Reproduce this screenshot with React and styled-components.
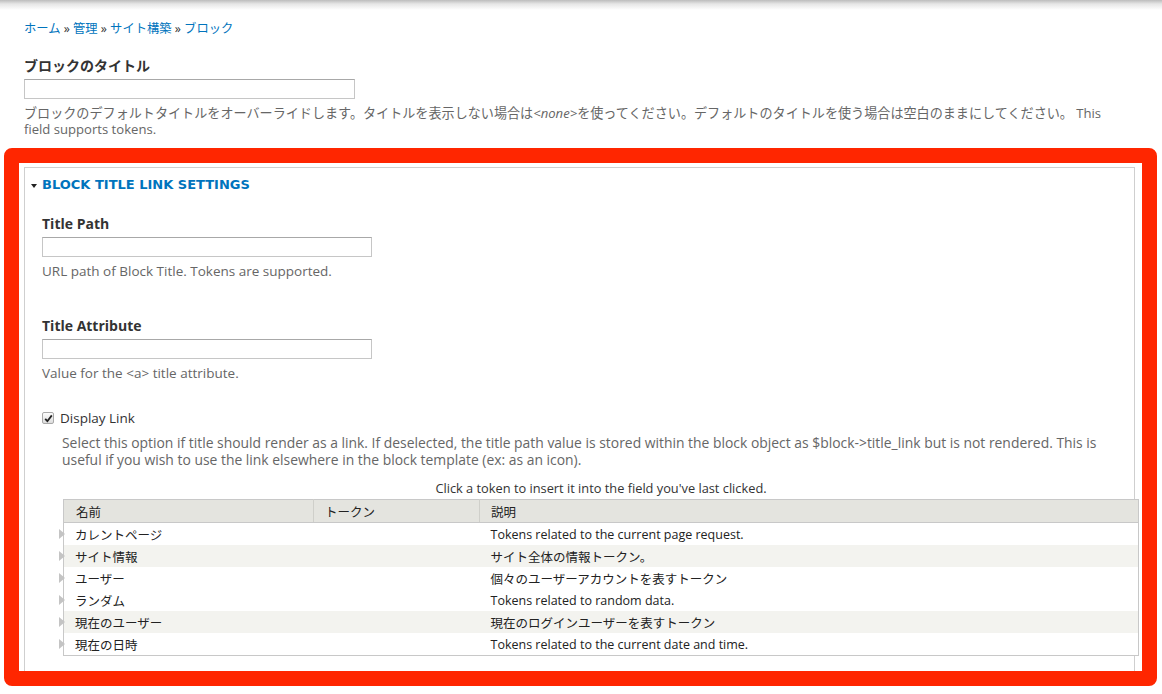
import React from "react";
import styled, { createGlobalStyle } from "styled-components";

const GlobalStyle = createGlobalStyle`
  html, body {
    margin: 0;
    padding: 0;
    background: #fff;
  }
  body {
    font-family: "Open Sans", "Noto Sans CJK JP", sans-serif;
    color: #333;
  }
`;

const tokens = [
  { name: "カレントページ", desc: "Tokens related to the current page request.", alt: false },
  { name: "サイト情報", desc: "サイト全体の情報トークン。", alt: true },
  { name: "ユーザー", desc: "個々のユーザーアカウントを表すトークン", alt: false },
  { name: "ランダム", desc: "Tokens related to random data.", alt: false },
  { name: "現在のユーザー", desc: "現在のログインユーザーを表すトークン", alt: true },
  { name: "現在の日時", desc: "Tokens related to the current date and time.", alt: false },
];

export default function App() {
  return (
    <>
      <GlobalStyle />
      <Page>
        <TopShadow />
        <Breadcrumb>
          <a>ホーム</a> » <a>管理</a> » <a>サイト構築</a> » <a>ブロック</a>
        </Breadcrumb>

        <TopField>
          <Label>ブロックのタイトル</Label>
          <TextInput $width={331} />
          <Description $size={13.1}>
            ブロックのデフォルトタイトルをオーバーライドします。タイトルを表示しない場合は<em>&lt;none&gt;</em>を使ってください。デフォルトのタイトルを使う場合は空白のままにしてください。 This field supports tokens.
          </Description>
        </TopField>

        <Highlight>
          <Fieldset>
            <Legend>
              <Caret />
              BLOCK TITLE LINK SETTINGS
            </Legend>

            <Field $top={21}>
              <Label>Title Path</Label>
              <TextInput $width={330} />
              <Description>URL path of Block Title. Tokens are supported.</Description>
            </Field>

            <Field $top={38}>
              <Label>Title Attribute</Label>
              <TextInput $width={330} />
              <Description>Value for the &lt;a&gt; title attribute.</Description>
            </Field>

            <CheckRow>
              <CheckBox>
                <svg width="9" height="9" viewBox="0 0 9 9">
                  <path d="M1.2 4.8 L3.4 7.2 L7.8 1.4" fill="none" stroke="#222" strokeWidth="1.8" />
                </svg>
              </CheckBox>
              <CheckLabel>Display Link</CheckLabel>
            </CheckRow>
            <CheckDescription>
              Select this option if title should render as a link. If deselected, the title path value is stored within the block object as $block-&gt;title_link but is not rendered. This is useful if you wish to use the link elsewhere in the block template (ex: as an icon).
            </CheckDescription>

            <TokenArea>
              <TokenHelp>Click a token to insert it into the field you've last clicked.</TokenHelp>
              <TokenTable>
                <thead>
                  <tr>
                    <Th $width={250}>名前</Th>
                    <Th $width={166}>トークン</Th>
                    <Th>説明</Th>
                  </tr>
                </thead>
                <tbody>
                  {tokens.map((t) => (
                    <Row key={t.name} $alt={t.alt}>
                      <NameCell>
                        <Expander />
                        {t.name}
                      </NameCell>
                      <Td />
                      <Td>{t.desc}</Td>
                    </Row>
                  ))}
                </tbody>
              </TokenTable>
            </TokenArea>
          </Fieldset>
        </Highlight>
      </Page>
    </>
  );
}

const Page = styled.div`
  width: 1162px;
  min-height: 694px;
  overflow: hidden;
`;

const TopShadow = styled.div`
  height: 10px;
  background: linear-gradient(#bcbcbc, #e6e6e6 40%, #fff);
`;

const Breadcrumb = styled.div`
  margin: 11px 0 0 24px;
  font-size: 12.3px;
  line-height: 16px;
  color: #333;

  a {
    color: #0074bd;
    text-decoration: none;
  }
`;

const TopField = styled.div`
  margin: 20px 0 0 24px;
  width: 1100px;
`;

const Field = styled.div`
  margin-top: ${(p) => p.$top}px;
`;

const Label = styled.div`
  font-size: 14px;
  line-height: 18px;
  font-weight: bold;
  color: #333;
  margin-bottom: 4px;
`;

const TextInput = styled.input.attrs({ type: "text" })`
  display: block;
  box-sizing: border-box;
  width: ${(p) => p.$width}px;
  height: 20px;
  margin: 0;
  padding: 2px 4px;
  border: 1px solid #c6c6c6;
  border-top-color: #a8a8a8;
  background: #fff;
`;

const Description = styled.div`
  margin-top: 6px;
  font-size: ${(p) => p.$size || 13.5}px;
  line-height: 16px;
  color: #666;

  em {
    font-style: italic;
  }
`;

const Highlight = styled.div`
  margin: 11px 5px 0 4px;
  border: 15px solid #ff2600;
  border-radius: 8px;
  padding: 4px 7px 0 5px;
  height: 504px;
  overflow: hidden;
`;

const Fieldset = styled.div`
  border: 1px solid #cfcfcf;
  border-bottom: none;
  padding: 8px 0 40px 17px;
`;

const Legend = styled.div`
  position: relative;
  font-family: "DejaVu Sans", "Open Sans", sans-serif;
  font-size: 13px;
  line-height: 18px;
  font-weight: bold;
  color: #0074bd;
`;

const Caret = styled.span`
  position: absolute;
  left: -11px;
  top: 8px;
  width: 0;
  height: 0;
  border-left: 3px solid transparent;
  border-right: 3px solid transparent;
  border-top: 4px solid #222;
`;

const CheckRow = styled.div`
  display: flex;
  align-items: center;
  gap: 6px;
  margin-top: 28px;
  height: 18px;
`;

const CheckBox = styled.span`
  box-sizing: border-box;
  width: 12px;
  height: 12px;
  border: 1px solid #a9a9a9;
  border-radius: 2px;
  background: linear-gradient(#fdfdfd, #dcdcdc);
  display: flex;
  align-items: center;
  justify-content: center;
`;

const CheckLabel = styled.span`
  font-size: 13.5px;
  color: #333;
`;

const CheckDescription = styled.div`
  margin: 7px 0 0 20px;
  width: 1045px;
  font-size: 13.9px;
  line-height: 17px;
  color: #666;
`;

const TokenArea = styled.div`
  margin: 12px 0 0 21px;
  width: 1076px;
`;

const TokenHelp = styled.div`
  text-align: center;
  font-size: 12.8px;
  line-height: 16px;
  color: #333;
  margin-bottom: 3px;
`;

const TokenTable = styled.table`
  width: 100%;
  table-layout: fixed;
  border-collapse: collapse;
  border: 1px solid #c8c8c8;
  font-size: 12.5px;
  color: #222;
`;

const Th = styled.th`
  box-sizing: border-box;
  width: ${(p) => (p.$width ? `${p.$width}px` : "auto")};
  height: 23px;
  padding: 0 11px;
  text-align: left;
  font-weight: normal;
  background: #e4e4df;
  border-left: 1px solid #cfcfca;
  border-bottom: 1px solid #c8c8c8;
  &:first-child {
    border-left: none;
    padding-left: 12px;
  }
`;

const Row = styled.tr`
  background: ${(p) => (p.$alt ? "#f3f3ef" : "#fff")};
`;

const Td = styled.td`
  height: 22px;
  padding: 0 11px;
  white-space: nowrap;
`;

const NameCell = styled(Td)`
  position: relative;
`;

const Expander = styled.span`
  position: absolute;
  left: -5px;
  top: 6px;
  width: 0;
  height: 0;
  border-top: 5px solid transparent;
  border-bottom: 5px solid transparent;
  border-left: 6px solid #c4c4c4;
`;
